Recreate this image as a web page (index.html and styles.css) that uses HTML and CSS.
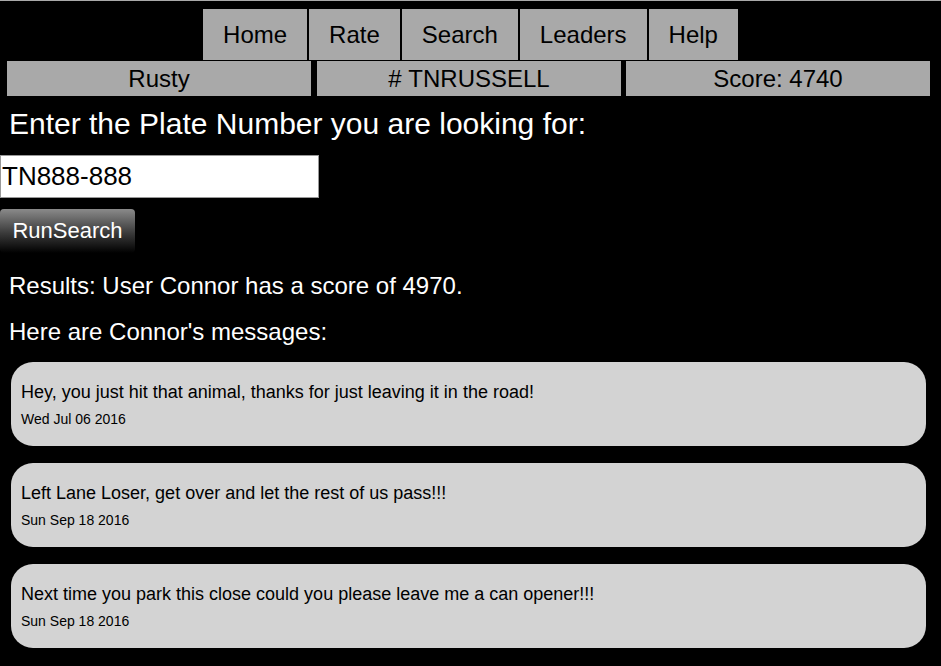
FILE: index.html
```html
<!DOCTYPE html>
<html>
<head>
<meta charset="utf-8">
<title>Search</title>
<link rel="stylesheet" href="styles.css">
</head>
<body>
<nav class="nav">
  <a class="nav-item" href="#">Home</a>
  <a class="nav-item" href="#">Rate</a>
  <a class="nav-item" href="#">Search</a>
  <a class="nav-item" href="#">Leaders</a>
  <a class="nav-item" href="#">Help</a>
</nav>
<div class="info">
  <div class="info-cell">Rusty</div>
  <div class="info-cell">#&nbsp;TNRUSSELL</div>
  <div class="info-cell">Score: 4740</div>
</div>
<h2 class="prompt">Enter the Plate Number you are looking for:</h2>
<input class="plate" type="text" value="TN888-888">
<button class="run">RunSearch</button>
<p class="result">Results: User Connor has a score of 4970.</p>
<p class="result result-second">Here are Connor's messages:</p>
<div class="messages">
  <div class="msg">
    <div class="msg-text">Hey, you just hit that animal, thanks for just leaving it in the road!</div>
    <div class="msg-date">Wed Jul 06 2016</div>
  </div>
  <div class="msg">
    <div class="msg-text">Left Lane Loser, get over and let the rest of us pass!!!</div>
    <div class="msg-date">Sun Sep 18 2016</div>
  </div>
  <div class="msg">
    <div class="msg-text">Next time you park this close could you please leave me a can opener!!!</div>
    <div class="msg-date">Sun Sep 18 2016</div>
  </div>
</div>
</body>
</html>
```

FILE: styles.css
```css
html, body {
  margin: 0;
  padding: 0;
  background: #000;
}
body {
  border-top: 1px solid #a9a9a9;
  font-family: "Liberation Sans", Arial, sans-serif;
  color: #fff;
  min-height: 665px;
}
.nav {
  display: flex;
  justify-content: center;
  gap: 2px;
  padding-top: 8px;
}
.nav-item {
  display: flex;
  align-items: center;
  height: 51px;
  padding: 0 20px;
  background: #a9a9a9;
  color: #000;
  font-size: 24px;
  text-decoration: none;
}
.info {
  display: flex;
  gap: 5px;
  padding-left: 7px;
  margin-top: 1px;
}
.info-cell {
  width: 304px;
  height: 35px;
  display: flex;
  align-items: center;
  justify-content: center;
  background: #a9a9a9;
  color: #000;
  font-size: 24px;
}
.info-cell + .info-cell {
  margin-left: 1px;
}
.info-cell:last-child {
  margin-left: 0;
}
.prompt {
  margin: 11px 0 0 9px;
  font-size: 30px;
  font-weight: normal;
  line-height: 34px;
}
.plate {
  display: block;
  box-sizing: border-box;
  width: 319px;
  height: 43px;
  margin: 14px 0 0 0;
  padding: 0 0 0 1px;
  border: 1px solid #999;
  background: #fff;
  color: #000;
  font-family: "Liberation Sans", Arial, sans-serif;
  font-size: 26px;
  outline: none;
}
.run {
  display: block;
  width: 135px;
  height: 44px;
  margin: 11px 0 0 0;
  padding: 0;
  border: none;
  border-radius: 4px;
  background: linear-gradient(to bottom, #8a8a8a 0%, #3a3a3a 55%, #000 100%);
  color: #fff;
  font-family: "Liberation Sans", Arial, sans-serif;
  font-size: 22px;
}
.result {
  margin: 19px 0 0 9px;
  font-size: 24px;
  line-height: 28px;
}
.result-second {
  margin-top: 18px;
}
.messages {
  display: flex;
  flex-direction: column;
  gap: 17px;
  margin: 16px 15px 0 11px;
}
.msg {
  background: #d3d3d3;
  border-radius: 22px;
  color: #000;
  padding: 20px 10px 18px;
}
.msg-text {
  font-size: 18px;
  line-height: 21px;
}
.msg-date {
  margin-top: 8px;
  font-size: 14px;
  line-height: 17px;
}
```
